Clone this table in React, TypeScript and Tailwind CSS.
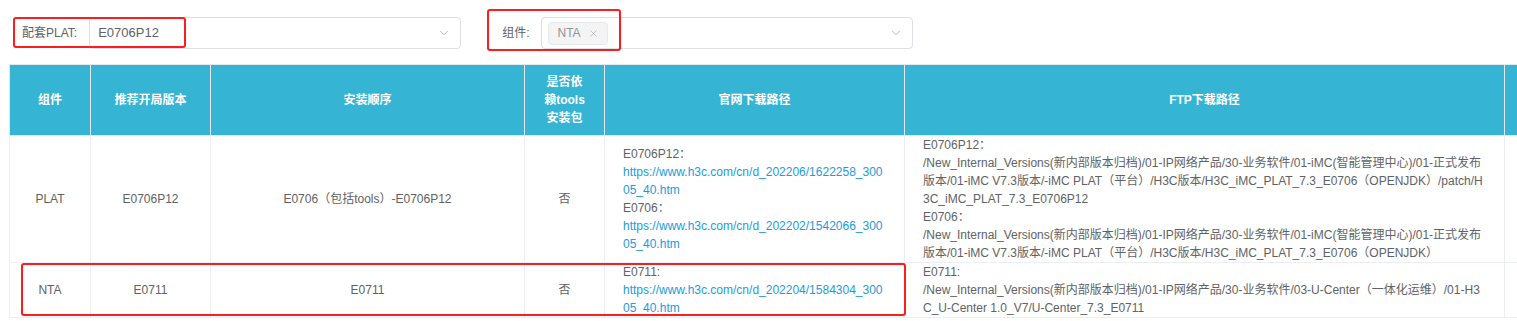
import { ChevronDown, X } from "lucide-react";

const th =
  "border border-[#e4e7ed] bg-[#35b4d4] px-[18px] text-center align-middle text-[12px] font-bold leading-[18px] text-white";
const td =
  "border border-[#ebeef5] px-[18px] py-0 align-middle text-[12px] leading-[18px] text-[#606266]";

function Select({ children }: { children?: React.ReactNode }) {
  return (
    <div className="flex h-[32px] w-[372px] items-center justify-between rounded-[4px] border border-[#dcdfe6] bg-white pl-[8px] pr-[9px]">
      <div className="flex items-center">{children}</div>
      <ChevronDown size={14} strokeWidth={1.5} className="text-[#a8abb2]" />
    </div>
  );
}

export default function App() {
  return (
    <div className="relative h-[321px] w-[1517px] overflow-hidden bg-white font-['Liberation_Sans','Noto_Sans_CJK_SC',sans-serif]">
      <div className="flex items-center pt-[17px]">
        <div className="flex items-center pl-[22px]">
          <span className="mr-[12px] text-[12px] text-[#606266]">配套PLAT:</span>
          <Select>
            <span className="text-[13px] text-[#606266]">E0706P12</span>
          </Select>
        </div>
        <div className="ml-[41px] flex items-center">
          <span className="mr-[12px] text-[12px] text-[#606266]">组件:</span>
          <Select>
            <span className="-ml-[2px] flex h-[23px] items-center gap-[7px] rounded-[4px] border border-[#e9e9eb] bg-[#f4f4f5] px-[8px] text-[12px] text-[#909399]">
              NTA
              <X size={11} strokeWidth={1.5} className="text-[#a8abb2]" />
            </span>
          </Select>
        </div>
      </div>

      <div className="mt-[15px] pl-[9px]">
        <table className="w-[1695px] table-fixed border-collapse">
          <colgroup>
            <col className="w-[81px]" />
            <col className="w-[120px]" />
            <col className="w-[314px]" />
            <col className="w-[80px]" />
            <col className="w-[300px]" />
            <col className="w-[600px]" />
            <col className="w-[200px]" />
          </colgroup>
          <thead>
            <tr className="h-[71px]">
              <th className={th}>组件</th>
              <th className={th}>推荐开局版本</th>
              <th className={th}>安装顺序</th>
              <th className={th}>是否依赖tools安装包</th>
              <th className={th}>官网下载路径</th>
              <th className={th}>FTP下载路径</th>
              <th className={th}></th>
            </tr>
          </thead>
          <tbody>
            <tr>
              <td className={`${td} text-center`}>PLAT</td>
              <td className={`${td} text-center`}>E0706P12</td>
              <td className={`${td} text-center`}>E0706（包括tools）-E0706P12</td>
              <td className={`${td} text-center`}>否</td>
              <td className={`${td} break-all`}>
                <div>E0706P12：</div>
                <a className="text-[#1a9be0]">https://www.h3c.com/cn/d_202206/1622258_30005_40.htm</a>
                <div>E0706：</div>
                <a className="text-[#1a9be0]">https://www.h3c.com/cn/d_202202/1542066_30005_40.htm</a>
              </td>
              <td className={`${td} break-all`}>
                <div>E0706P12：</div>
                <div>
                  /New_Internal_Versions(新内部版本归档)/01-IP网络产品/30-业务软件/01-iMC(智能管理中心)/01-正式发布版本/01-iMC
                  V7.3版本/-iMC PLAT（平台）/H3C版本/H3C_iMC_PLAT_7.3_E0706（OPENJDK）/patch/H3C_iMC_PLAT_7.3_E0706P12
                </div>
                <div>E0706：</div>
                <div>
                  /New_Internal_Versions(新内部版本归档)/01-IP网络产品/30-业务软件/01-iMC(智能管理中心)/01-正式发布版本/01-iMC
                  V7.3版本/-iMC PLAT（平台）/H3C版本/H3C_iMC_PLAT_7.3_E0706（OPENJDK）
                </div>
              </td>
              <td className={td}></td>
            </tr>
            <tr>
              <td className={`${td} text-center`}>NTA</td>
              <td className={`${td} text-center`}>E0711</td>
              <td className={`${td} text-center`}>E0711</td>
              <td className={`${td} text-center`}>否</td>
              <td className={`${td} break-all`}>
                <div>E0711:</div>
                <a className="text-[#1a9be0]">https://www.h3c.com/cn/d_202204/1584304_30005_40.htm</a>
              </td>
              <td className={`${td} break-all`}>
                <div>E0711:</div>
                <div>
                  /New_Internal_Versions(新内部版本归档)/01-IP网络产品/30-业务软件/03-U-Center（一体化运维）/01-H3C_U-Center
                  1.0_V7/U-Center_7.3_E0711
                </div>
              </td>
              <td className={td}></td>
            </tr>
          </tbody>
        </table>
      </div>

      {/* red annotation boxes */}
      <div className="pointer-events-none absolute left-[13px] top-[17px] h-[31px] w-[173px] rounded-[3px] border-2 border-[#fa1e1e]" />
      <div className="pointer-events-none absolute left-[487px] top-[9px] h-[42px] w-[134px] rounded-[3px] border-2 border-[#fa1e1e]" />
      <div className="pointer-events-none absolute left-[21px] top-[263px] h-[53px] w-[885px] rounded-[3px] border-2 border-[#fa1e1e]" />
    </div>
  );
}
